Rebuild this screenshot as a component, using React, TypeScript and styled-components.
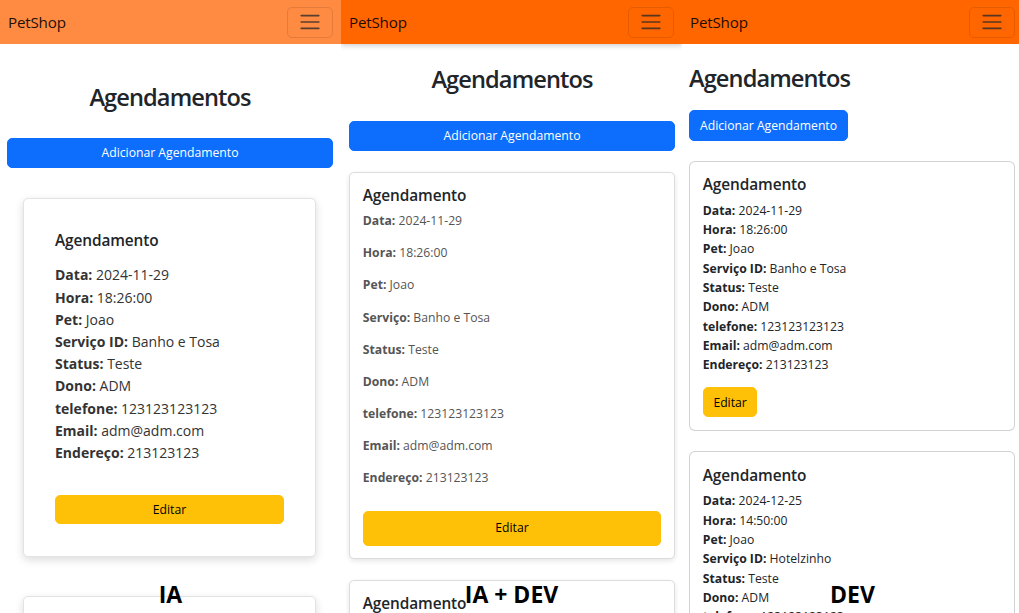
import React from "react";
import styled, { createGlobalStyle, css } from "styled-components";

type Variant = "ia" | "mix" | "dev";

const GlobalStyle = createGlobalStyle`
  html, body {
    margin: 0;
    padding: 0;
    background: #ffffff;
    overflow: hidden;
  }
  body {
    font-family: "Open Sans", "Noto Sans", Arial, sans-serif;
    color: #212529;
  }
  * { box-sizing: border-box; }
`;

const Screen = styled.div`
  display: flex;
  width: 1019px;
  height: 613px;
  overflow: hidden;
`;

const Panel = styled.section`
  position: relative;
  flex: 0 0 341px;
  width: 341px;
  height: 613px;
  overflow: hidden;
  background: #fff;
`;

const NavBar = styled.header<{ $v: Variant }>`
  position: relative;
  z-index: 2;
  height: 44px;
  display: flex;
  align-items: center;
  justify-content: space-between;
  padding: 0 8px;
  background: ${(p) => (p.$v === "ia" ? "#ff8a41" : "#ff6600")};
  ${(p) =>
    p.$v === "mix" &&
    css`
      box-shadow: 0 2px 5px rgba(0, 0, 0, 0.18);
    `}
`;

const Brand = styled.span`
  font-size: 15.2px;
  line-height: 19px;
  letter-spacing: -0.2px;
  color: rgba(0, 0, 0, 0.9);
`;

const Toggler = styled.button`
  width: 46px;
  height: 31px;
  padding: 0;
  display: flex;
  align-items: center;
  justify-content: center;
  background: transparent;
  border: 1px solid rgba(0, 0, 0, 0.1);
  border-radius: 5px;
`;

const Content = styled.main<{ $v: Variant }>`
  padding: 0 8px 0 7px;
  ${(p) =>
    p.$v === "mix" &&
    css`
      padding: 0 7px 0 8px;
    `}
`;

const Title = styled.h2<{ $v: Variant }>`
  margin: 0;
  font-size: 23.6px;
  line-height: 30.7px;
  font-weight: 600;
  letter-spacing: -0.9px;
  color: #212529;
  text-align: ${(p) => (p.$v === "dev" ? "left" : "center")};
  ${(p) =>
    p.$v === "ia" &&
    css`
      margin: 38px 0 25px;
    `}
  ${(p) =>
    p.$v === "mix" &&
    css`
      margin: 20px 0 26px;
    `}
  ${(p) =>
    p.$v === "dev" &&
    css`
      margin: 19px 0 16px;
    `}
`;

const AddButton = styled.button<{ $v: Variant }>`
  display: block;
  width: ${(p) => (p.$v === "dev" ? "auto" : "100%")};
  height: ${(p) => (p.$v === "dev" ? "31px" : "30px")};
  padding: 0 10px;
  font-family: inherit;
  font-size: 12.2px;
  line-height: 19px;
  color: #fff;
  background: #0d6efd;
  border: 1px solid #0d6efd;
  border-radius: 5px;
`;

const CardList = styled.div<{ $v: Variant }>`
  display: flex;
  flex-direction: column;
  gap: ${(p) => (p.$v === "ia" ? "39px" : p.$v === "mix" ? "21px" : "20px")};
  margin-top: ${(p) => (p.$v === "ia" ? "30px" : p.$v === "mix" ? "21px" : "20px")};
  ${(p) =>
    p.$v === "ia" &&
    css`
      margin-left: 16px;
      margin-right: 17px;
    `}
`;

const Card = styled.article<{ $v: Variant }>`
  background: #fff;
  border-radius: 5px;
  ${(p) =>
    p.$v === "ia" &&
    css`
      border: 1px solid #e3e3e3;
      box-shadow: 0 3px 8px rgba(0, 0, 0, 0.14);
      padding: 32px 31px 32px;
    `}
  ${(p) =>
    p.$v === "mix" &&
    css`
      border: 1px solid #dcdcdc;
      box-shadow: 0 2px 5px rgba(0, 0, 0, 0.1);
      padding: 12.8px;
    `}
  ${(p) =>
    p.$v === "dev" &&
    css`
      border: 1px solid rgba(0, 0, 0, 0.175);
      border-radius: 6px;
      padding: 13.3px 12.8px 13px;
    `}
`;

const CardTitle = styled.h5<{ $v: Variant }>`
  margin: 0 0 ${(p) => (p.$v === "ia" ? "14.4px" : "6.4px")};
  font-size: 15.4px;
  line-height: 19.2px;
  font-weight: 600;
  letter-spacing: -0.1px;
  color: #212529;
`;

const Fields = styled.div<{ $v: Variant }>`
  margin-bottom: ${(p) => (p.$v === "ia" ? "31px" : p.$v === "mix" ? "23px" : "12.8px")};
`;

const Field = styled.p<{ $v: Variant }>`
  margin: 0;
  font-size: ${(p) => (p.$v === "ia" ? "14px" : "12.2px")};
  line-height: ${(p) => (p.$v === "ia" ? "22.2px" : "19.35px")};
  color: ${(p) => (p.$v === "ia" ? "#333" : p.$v === "mix" ? "#555" : "#212529")};
  ${(p) =>
    p.$v === "mix" &&
    css`
      margin-bottom: 12.8px;
    `}
  strong {
    font-weight: 700;
  }
`;

const EditButton = styled.button<{ $v: Variant }>`
  display: block;
  font-family: inherit;
  font-size: 12.2px;
  line-height: 19.2px;
  color: #000;
  background: #ffc107;
  border: 1px solid #ffc107;
  border-radius: 5px;
  ${(p) =>
    p.$v === "ia" &&
    css`
      width: 100%;
      height: 29px;
      padding: 0;
    `}
  ${(p) =>
    p.$v === "mix" &&
    css`
      width: 100%;
      height: 35px;
      padding: 0;
    `}
  ${(p) =>
    p.$v === "dev" &&
    css`
      height: 30px;
      padding: 0 9.6px;
    `}
`;

const Caption = styled.div`
  position: absolute;
  left: 0;
  right: 0;
  top: 579px;
  z-index: 3;
  text-align: center;
  font-family: "Open Sans", "Noto Sans", Arial, sans-serif;
  font-weight: 700;
  font-size: 23px;
  line-height: 30px;
  color: #000;
`;

const MenuIcon = () => (
  <svg width="24" height="24" viewBox="0 0 30 30" aria-hidden="true">
    <path
      d="M4 7h22M4 15h22M4 23h22"
      stroke="rgba(33,37,41,0.75)"
      strokeWidth="2"
      strokeLinecap="round"
      fill="none"
    />
  </svg>
);

type Appointment = {
  data: string;
  hora: string;
  pet: string;
  servico: string;
  status: string;
  dono: string;
  telefone: string;
  email: string;
  endereco: string;
};

const appointments: Appointment[] = [
  {
    data: "2024-11-29",
    hora: "18:26:00",
    pet: "Joao",
    servico: "Banho e Tosa",
    status: "Teste",
    dono: "ADM",
    telefone: "123123123123",
    email: "adm@adm.com",
    endereco: "213123123",
  },
  {
    data: "2024-12-25",
    hora: "14:50:00",
    pet: "Joao",
    servico: "Hotelzinho",
    status: "Teste",
    dono: "ADM",
    telefone: "123123123123",
    email: "adm@adm.com",
    endereco: "213123123",
  },
];

const AppointmentCard = ({ v, a }: { v: Variant; a: Appointment }) => {
  const rows: [string, string][] = [
    ["Data:", a.data],
    ["Hora:", a.hora],
    ["Pet:", a.pet],
    [v === "mix" ? "Serviço:" : "Serviço ID:", a.servico],
    ["Status:", a.status],
    ["Dono:", a.dono],
    ["telefone:", a.telefone],
    ["Email:", a.email],
    ["Endereço:", a.endereco],
  ];
  return (
    <Card $v={v}>
      <CardTitle $v={v}>Agendamento</CardTitle>
      <Fields $v={v}>
        {rows.map(([label, value]) => (
          <Field $v={v} key={label}>
            <strong>{label}</strong> {value}
          </Field>
        ))}
      </Fields>
      <EditButton $v={v}>Editar</EditButton>
    </Card>
  );
};

const PetShopPanel = ({ v, caption }: { v: Variant; caption: string }) => (
  <Panel>
    <NavBar $v={v}>
      <Brand>PetShop</Brand>
      <Toggler aria-label="menu">
        <MenuIcon />
      </Toggler>
    </NavBar>
    <Content $v={v}>
      <Title $v={v}>Agendamentos</Title>
      <AddButton $v={v}>Adicionar Agendamento</AddButton>
      <CardList $v={v}>
        {appointments.map((a, i) => (
          <AppointmentCard v={v} a={a} key={i} />
        ))}
      </CardList>
    </Content>
    <Caption>{caption}</Caption>
  </Panel>
);

export default function App() {
  return (
    <>
      <GlobalStyle />
      <Screen>
        <PetShopPanel v="ia" caption="IA" />
        <PetShopPanel v="mix" caption="IA + DEV" />
        <PetShopPanel v="dev" caption="DEV" />
      </Screen>
    </>
  );
}
